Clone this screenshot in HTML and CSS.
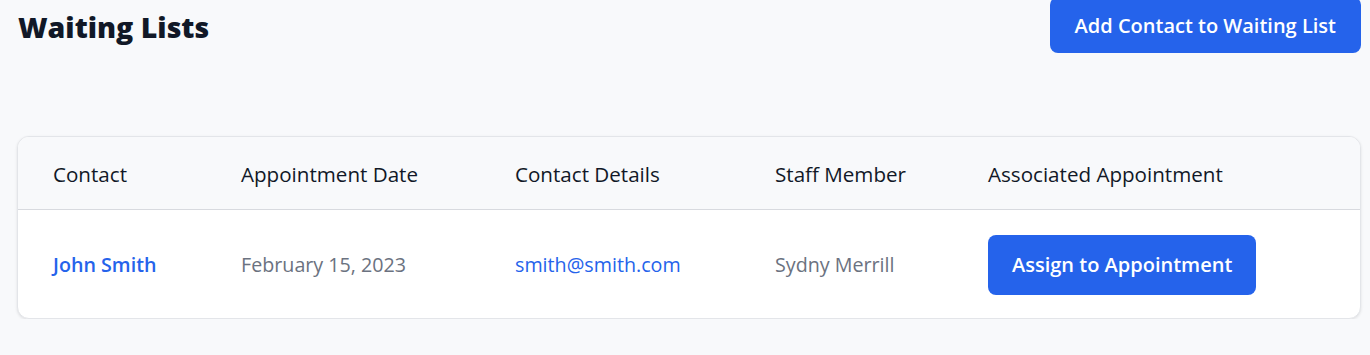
FILE: index.html
```html
<!DOCTYPE html>
<html lang="en">
<head>
<meta charset="utf-8">
<title>Waiting Lists</title>
<link rel="stylesheet" href="styles.css">
</head>
<body>
<div class="page">
  <header class="topbar">
    <h1 class="title">Waiting Lists</h1>
    <button class="btn btn-add">Add Contact to Waiting List</button>
  </header>
  <section class="card">
    <div class="row row-head">
      <div class="cell">Contact</div>
      <div class="cell">Appointment Date</div>
      <div class="cell">Contact Details</div>
      <div class="cell">Staff Member</div>
      <div class="cell">Associated Appointment</div>
    </div>
    <div class="row row-body">
      <div class="cell"><a class="link name" href="#">John Smith</a></div>
      <div class="cell muted">February 15, 2023</div>
      <div class="cell"><a class="link" href="#">smith@smith.com</a></div>
      <div class="cell muted">Sydny Merrill</div>
      <div class="cell"><button class="btn btn-assign">Assign to Appointment</button></div>
    </div>
  </section>
</div>
</body>
</html>
```
FILE: styles.css
```css
html, body {
  margin: 0;
  padding: 0;
  background: #f8f9fb;
}
body {
  font-family: "Open Sans", "Noto Sans", "Liberation Sans", sans-serif;
  color: #111827;
}
.page {
  width: 1344px;
  padding: 0 9px 0 17px;
  margin-top: -3px;
}
.topbar {
  display: flex;
  justify-content: space-between;
  align-items: flex-start;
}
.title {
  margin: 12px 0 0 1px;
  font-size: 28.5px;
  font-weight: 800;
  line-height: 36px;
  color: #111827;
}
.btn {
  font-family: inherit;
  border: none;
  background: #2563eb;
  color: #fff;
  font-weight: 600;
  cursor: pointer;
  border-radius: 8px;
}
.btn-add {
  height: 56px;
  padding: 0 25px;
  font-size: 20px;
}
.card {
  margin-top: 83px;
  background: #fff;
  border: 1px solid #e3e5e9;
  border-radius: 12px;
  box-shadow: 0 1px 3px rgba(0,0,0,0.1);
  overflow: hidden;
}
.row {
  display: grid;
  grid-template-columns: 188px 274px 260px 213px 1fr;
  align-items: center;
  padding-left: 35px;
  box-sizing: border-box;
}
.row-head {
  height: 73px;
  padding-top: 1px;
  background: #f8f9fb;
  border-bottom: 1px solid #d8dadf;
  color: #111827;
  font-weight: 500;
  font-size: 20.6px;
}
.row-body {
  height: 108px;
  padding-top: 1px;
  font-size: 19.7px;
}
.link {
  color: #2563eb;
  text-decoration: none;
}
.name {
  font-weight: 600;
}
.muted {
  color: #6b7280;
}
.btn-assign {
  height: 60px;
  padding: 0 24px;
  font-size: 20px;
}
```
